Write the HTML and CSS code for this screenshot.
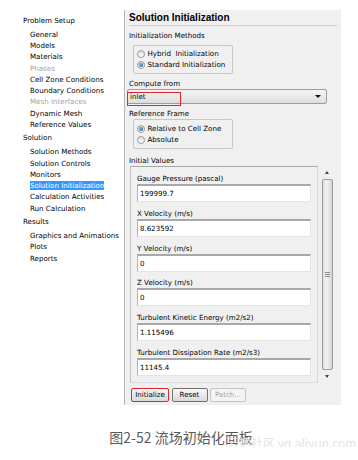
FILE: index.html
```html
<!DOCTYPE html>
<html lang="zh-CN">
  <head>
    <meta charset="UTF-8" />
    <meta name="viewport" content="width=device-width, initial-scale=1.0" />
    <title>流场初始化面板</title>
    <link rel="stylesheet" href="styles.css">
  </head>
  <body>
    <div class="shot">
      <div class="tree">
        <div class="grp">Problem Setup</div>
        <div class="item">General</div>
        <div class="item">Models</div>
        <div class="item">Materials</div>
        <div class="item off">Phases</div>
        <div class="item">Cell Zone Conditions</div>
        <div class="item">Boundary Conditions</div>
        <div class="item off">Mesh Interfaces</div>
        <div class="item">Dynamic Mesh</div>
        <div class="item">Reference Values</div>
        <div class="grp">Solution</div>
        <div class="item">Solution Methods</div>
        <div class="item">Solution Controls</div>
        <div class="item">Monitors</div>
        <div class="item"><span class="sel">Solution Initialization</span></div>
        <div class="item">Calculation Activities</div>
        <div class="item">Run Calculation</div>
        <div class="grp">Results</div>
        <div class="item">Graphics and Animations</div>
        <div class="item">Plots</div>
        <div class="item">Reports</div>
      </div>

      <div class="panel">
        <div class="title">Solution Initialization</div>

        <div class="label">Initialization Methods</div>
        <div class="box box-methods">
          <div class="radio"><span class="dot"></span>Hybrid&nbsp; Initialization</div>
          <div class="radio on"><span class="dot"></span>Standard Initialization</div>
        </div>

        <div class="label">Compute from</div>
        <div class="select">
          <span class="sel-text">inlet</span>
          <span class="caret"></span>
          <span class="mark"></span>
        </div>

        <div class="label">Reference Frame</div>
        <div class="box box-frame">
          <div class="radio on"><span class="dot"></span>Relative to Cell Zone</div>
          <div class="radio"><span class="dot"></span>Absolute</div>
        </div>

        <div class="label label-iv">Initial Values</div>
        <div class="iv-row">
          <div class="iv-box">
            <div class="f-label">Gauge Pressure (pascal)</div>
            <div class="field">199999.7</div>
            <div class="f-label">X Velocity (m/s)</div>
            <div class="field">8.623592</div>
            <div class="f-label">Y Velocity (m/s)</div>
            <div class="field">0</div>
            <div class="f-label">Z Velocity (m/s)</div>
            <div class="field">0</div>
            <div class="f-label">Turbulent Kinetic Energy (m2/s2)</div>
            <div class="field">1.115496</div>
            <div class="f-label">Turbulent Dissipation Rate (m2/s3)</div>
            <div class="field">11145.4</div>
          </div>
          <div class="scroll">
            <div class="arrow up"></div>
            <div class="thumb"><span class="grip"></span></div>
            <div class="arrow down"></div>
          </div>
        </div>

        <div class="btns">
          <div class="btn marked">Initialize</div>
          <div class="btn">Reset</div>
          <div class="btn dis">Patch...</div>
        </div>
        <div class="btns btns-next">
          <div class="btn wide">&nbsp;</div>
          <div class="btn mid">&nbsp;</div>
        </div>
      </div>
    </div>

    <div class="caption">图2-52 流场初始化面板<span class="watermark">云栖社区 yq.aliyun.com</span></div>
  </body>
</html>
```

FILE: styles.css
```css
* {
  padding: 0;
  margin: 0;
  box-sizing: border-box;
}
body {
  background-color: #fff;
  font-family: "DejaVu Sans", "Liberation Sans", sans-serif;
  font-size: 7.1px;
  color: #000;
}
.shot {
  display: flex;
  margin: 10px 0 0 17px;
}

/* tree on the left */
.tree {
  width: 107px;
  padding-top: 2.5px;
}
.grp {
  line-height: 11.25px;
  margin: 2px 0 3px 6px;
}
.item {
  line-height: 11.25px;
  padding-left: 13px;
  white-space: nowrap;
}
.item.off {
  color: #a3a3a3;
}
.sel {
  background-color: #3399ff;
  color: #fff;
}

/* right panel */
.panel {
  width: 217px;
  height: 395px;
  background-color: #f0f0f0;
  border-left: 1px solid #b4b4b4;
  padding-left: 2px;
  overflow: hidden;
}
.title {
  font-family: "Liberation Sans", Arial, sans-serif;
  font-weight: bold;
  font-size: 10px;
  line-height: 15px;
  margin: 0 4px 0 2px;
  border-bottom: 1px solid #cfcfcf;
}
.label {
  line-height: 11px;
  padding-left: 2px;
  margin-top: 4px;
}
.label-iv {
  margin-top: 5.5px;
}
.box {
  width: 100px;
  margin: 4px 0 0 6px;
  border: 1px solid #c6c6c6;
  border-radius: 2px;
  padding: 3px 0 3px 3px;
}
.box-frame {
  padding-top: 4px;
  margin-top: 0;
}
.radio {
  display: flex;
  align-items: center;
  line-height: 10.5px;
  white-space: nowrap;
}
.dot {
  width: 8px;
  height: 8px;
  border-radius: 50%;
  border: 1px solid #9a9a9a;
  background: linear-gradient(#dcdcdc, #fdfdfd);
  margin-right: 2.5px;
  display: flex;
  justify-content: center;
  align-items: center;
}
.radio.on .dot::after {
  content: '';
  width: 4px;
  height: 4px;
  border-radius: 50%;
  background: radial-gradient(circle at 40% 35%, #7fb1dc, #1c4f84);
}

.select {
  position: relative;
  width: 200px;
  height: 15px;
  border: 1px solid #9d9d9d;
  border-radius: 2px;
  background: linear-gradient(#f5f5f5, #dedede);
  display: flex;
  align-items: center;
  justify-content: space-between;
  padding: 0 5px 0 2px;
}
.caret {
  width: 0;
  height: 0;
  border-left: 3px solid transparent;
  border-right: 3px solid transparent;
  border-top: 3.5px solid #111;
}
.mark {
  position: absolute;
  left: -1px;
  top: 2px;
  width: 54px;
  height: 14px;
  border: 1.5px solid #e3262b;
}

.iv-row {
  display: flex;
  margin-left: 3px;
}
.iv-box {
  width: 188px;
  height: 217px;
  border: 1px solid #dadada;
  border-top-color: #a9a9a9;
  border-left-color: #c2c2c2;
  padding: 6.5px 0 0 6px;
}
.f-label {
  line-height: 11px;
  white-space: nowrap;
}
.field {
  width: 174px;
  height: 18px;
  margin-bottom: 5.8px;
  background-color: #fff;
  border: 1px solid #e4e4e4;
  border-top: 2px solid #a8a8a8;
  border-left-color: #b5b5b5;
  padding-left: 2px;
  line-height: 15px;
}

.scroll {
  width: 12px;
  margin-left: 3px;
  height: 217px;
  display: flex;
  flex-direction: column;
  align-items: center;
}
.arrow {
  height: 13px;
  width: 12px;
  display: flex;
  justify-content: center;
  align-items: center;
}
.arrow::after {
  content: '';
  width: 0;
  height: 0;
  border-left: 2.5px solid transparent;
  border-right: 2.5px solid transparent;
}
.arrow.up::after {
  border-bottom: 3px solid #444;
}
.arrow.down::after {
  border-top: 3px solid #444;
}
.thumb {
  flex: 1;
  width: 11px;
  border: 1px solid #9c9c9c;
  border-radius: 2px;
  background: linear-gradient(90deg, #dcdcdc, #f4f4f4 35%, #d4d4d4);
  display: flex;
  justify-content: center;
  align-items: center;
}
.grip {
  width: 5px;
  height: 5px;
  background: repeating-linear-gradient(#8a8a8a 0 1px, #eee 1px 2px);
}

.btns {
  display: flex;
  gap: 2.5px;
  margin: 5px 0 0 4px;
}
.btn {
  width: 36px;
  height: 14px;
  line-height: 12px;
  text-align: center;
  border: 1px solid #707070;
  border-radius: 2px;
  background: linear-gradient(#f7f7f7, #dadada);
}
.btn.marked {
  width: 38px;
  border: 1.5px solid #e3262b;
  line-height: 11px;
}
.btn.dis {
  color: #a3a3a3;
  border-color: #c4c4c4;
  background: #f4f4f4;
}
.btns-next {
  gap: 5px;
}
.btn.wide {
  width: 76px;
  border-color: #b8b8b8;
}
.btn.mid {
  width: 62px;
  border-color: #b8b8b8;
}

.caption {
  position: relative;
  margin-top: 22px;
  padding-left: 4px;
  text-align: center;
  font-family: "Noto Sans CJK SC", sans-serif;
  font-size: 14px;
  line-height: 20px;
  color: #595959;
}
.watermark {
  position: absolute;
  left: 227px;
  top: 9px;
  font-size: 12px;
  line-height: 14px;
  color: #e4e4e4;
  white-space: nowrap;
}
```
